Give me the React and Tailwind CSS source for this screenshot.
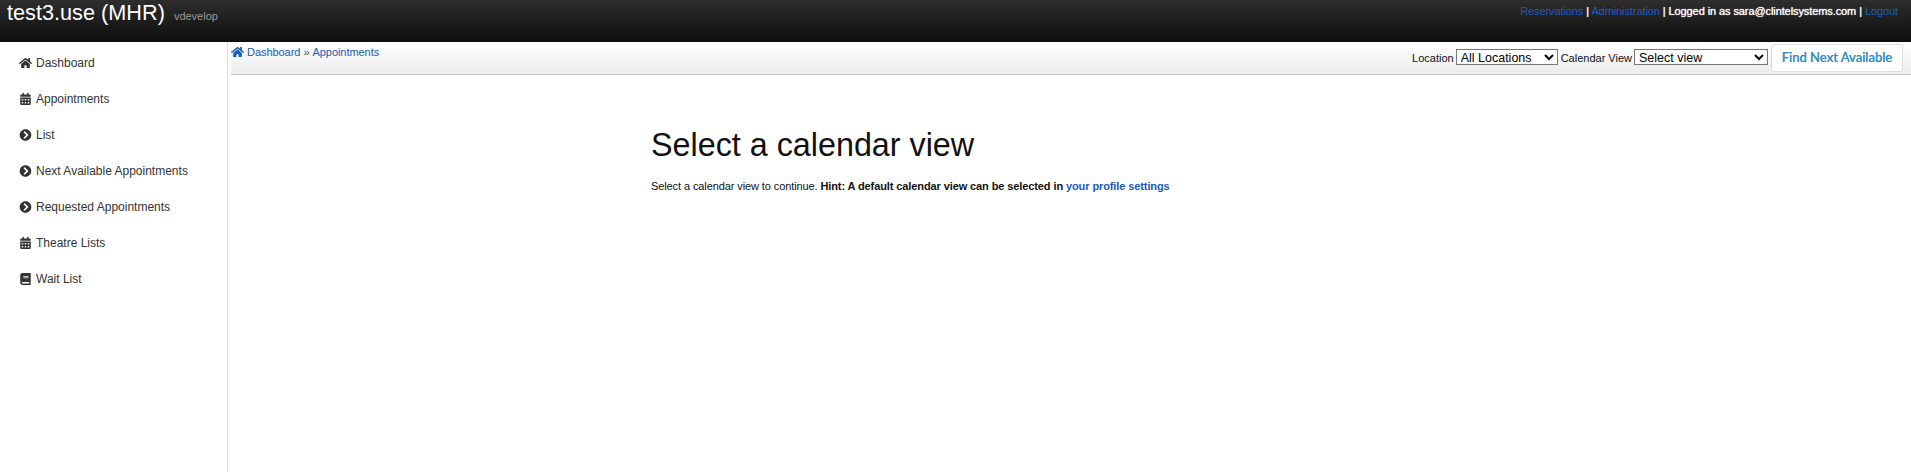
import { FaHome, FaCalendarAlt, FaChevronCircleRight, FaBook } from 'react-icons/fa';

const navItems = [
  { label: 'Dashboard', icon: FaHome },
  { label: 'Appointments', icon: FaCalendarAlt },
  { label: 'List', icon: FaChevronCircleRight },
  { label: 'Next Available Appointments', icon: FaChevronCircleRight },
  { label: 'Requested Appointments', icon: FaChevronCircleRight },
  { label: 'Theatre Lists', icon: FaCalendarAlt },
  { label: 'Wait List', icon: FaBook },
];

export default function App() {
  return (
    <div className="h-[472px] overflow-hidden bg-white font-['Liberation_Sans',Arial,sans-serif] text-[11px] text-[#111]">
      {/* Top bar */}
      <header className="flex h-[42px] items-start justify-between bg-gradient-to-b from-[#2e2e2e] to-[#0e0e0e] pl-[7px] pr-[13px]">
        <div className="flex items-baseline">
          <span className="text-[21.7px] leading-[26px] text-white">test3.use (MHR)</span>
          <span className="ml-[9px] text-[11px] text-[#999]">vdevelop</span>
        </div>
        <div className="mt-[5px] text-[11px] leading-[13px] tracking-[-0.09px] text-white [text-shadow:0_0_1px_#fff]">
          <a className="text-[#1c5cc0] [text-shadow:none]">Reservations</a> | <a className="text-[#1c5cc0] [text-shadow:none]">Administration</a> | Logged in as sara@clintelsystems.com | <a className="text-[#1c5cc0] [text-shadow:none]">Logout</a>
        </div>
      </header>

      <div className="flex h-[430px]">
        {/* Sidebar */}
        <nav className="w-[228px] shrink-0 border-r border-[#e0e0e0] pt-[3px] pl-[19px]">
          {navItems.map(({ label, icon: Icon }) => (
            <div key={label} className="flex h-[36px] items-center text-[12px] text-[#333]">
              <Icon className="mr-[4px] -mt-[1px] h-[12px] w-[13px] shrink-0 text-[#333]" />
              <span>{label}</span>
            </div>
          ))}
        </nav>

        <main className="min-w-0 flex-1 pl-[3px]">
          {/* Breadcrumb and filters */}
          <div className="flex h-[33px] justify-between border-b border-[#c9c9c9] bg-gradient-to-b from-white to-[#ececec] pr-[8px]">
            <div className="flex items-start pt-[4px] text-[11px] leading-[13px] tracking-[-0.05px] text-[#1a5bb5]">
              <FaHome className="mr-[3px] h-[12px] w-[13px]" />
              <a>Dashboard</a>
              <span className="mx-[3px] text-[#555]">»</span>
              <a>Appointments</a>
            </div>
            <div className="flex items-start pt-[2px] text-[11px]">
              <label className="mt-[8px] mr-[2px] leading-[13px]">Location</label>
              <select className="mt-[5px] mr-[3px] h-[16px] w-[102px] appearance-auto border border-[#767676] bg-white pb-[1px] text-[12.5px] leading-[14px] text-black">
                <option>All Locations</option>
              </select>
              <label className="mt-[8px] mr-[2px] leading-[13px]">Calendar View</label>
              <select className="mt-[5px] mr-[3px] h-[16px] w-[134px] appearance-auto border border-[#767676] bg-white pb-[1px] text-[12.5px] leading-[14px] text-black">
                <option>Select view</option>
              </select>
              <button className="h-[28px] w-[132px] rounded-[3px] border border-[#ddd] bg-white font-['Lato',sans-serif] text-[13px] font-medium text-[#3a8fc0] [text-shadow:0_0_0.3px_#3a8fc0]">
                Find Next Available
              </button>
            </div>
          </div>

          {/* Empty state */}
          <div className="pt-[50px] pl-[420px]">
            <h1 className="text-[32.3px] leading-[40px] font-normal text-[#111]">Select a calendar view</h1>
            <p className="mt-[15px] text-[11px] leading-[13px] tracking-[-0.1px]">
              Select a calendar view to continue. <strong>Hint: A default calendar view can be selected in <a className="text-[#1a5bb5]">your profile settings</a></strong>
            </p>
          </div>
        </main>
      </div>
    </div>
  );
}
